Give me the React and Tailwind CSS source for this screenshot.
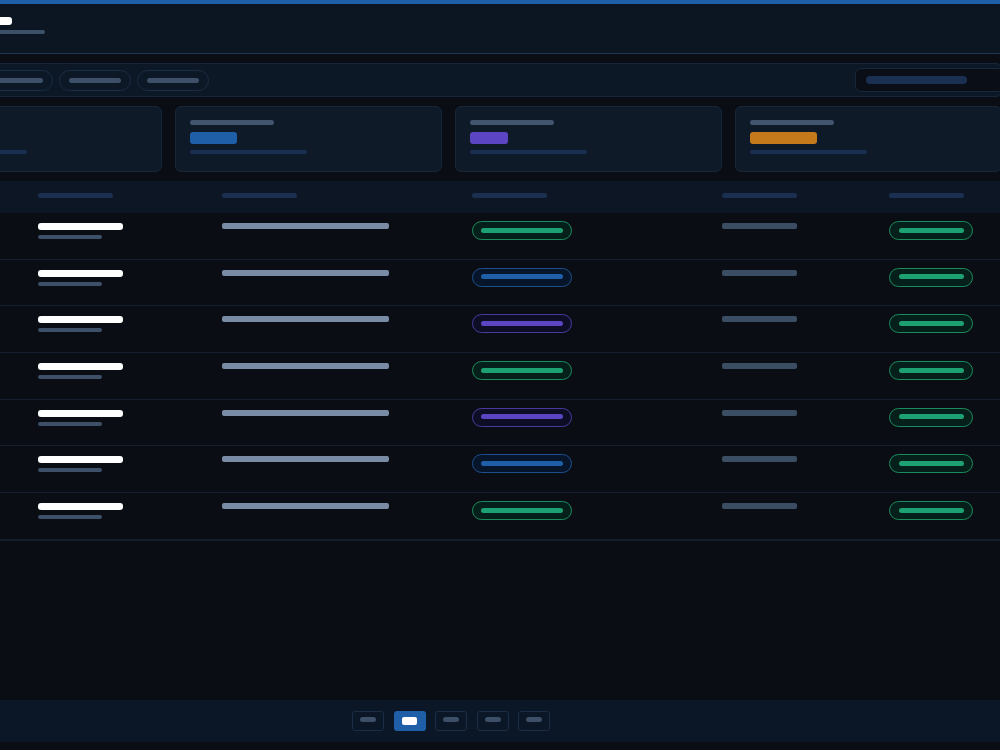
import { Fragment } from 'react'

const rows = [
  { status: 'green' },
  { status: 'blue' },
  { status: 'purple' },
  { status: 'green' },
  { status: 'purple' },
  { status: 'blue' },
  { status: 'green' },
]

const badgeStyles = {
  green: { box: 'border-[#1b8a5c] bg-[#05201a]', bar: 'bg-[#1da072]' },
  blue: { box: 'border-[#1d4f8c] bg-[#07152a]', bar: 'bg-[#1f5fa8]' },
  purple: { box: 'border-[#4a3a9e] bg-[#0e0d26]', bar: 'bg-[#5b45c2]' },
}

const stats = [
  { value: 'bg-[#1f5fa8] w-[47px]' },
  { value: 'bg-[#1f5fa8] w-[47px]' },
  { value: 'bg-[#5b45c2] w-[38px]' },
  { value: 'bg-[#c47a1a] w-[67px]' },
]

function Badge({ status, wide }) {
  const s = badgeStyles[status]
  return (
    <div
      className={`mt-[8px] flex h-[19px] items-center justify-center rounded-full border pb-[1px] ${s.box} ${
        wide ? 'w-[100px]' : 'w-[84px]'
      }`}
    >
      <div className={`h-[5px] rounded-full ${s.bar} ${wide ? 'w-[82px]' : 'w-[65px]'}`} />
    </div>
  )
}

export default function App() {
  return (
    <div
      className="flex h-[750px] w-[1137px] -ml-[120px] flex-col overflow-hidden bg-[#0a0e14]"
      style={{ fontFamily: 'Inter, "Liberation Sans", sans-serif' }}
    >
      <div className="h-1 bg-[#1f5fa8]" />

      <header className="flex h-[50px] flex-col border-b border-[#1c3352] bg-[#0c1623] px-[15px] pt-[13px]">
        <div className="h-[8px] w-[117px] rounded-[3px] bg-white" />
        <div className="mt-[5px] h-[4px] w-[150px] rounded-full bg-[#3d5068]" />
      </header>

      <main className="flex flex-col gap-[9px] px-[15px] pt-[9px]">
        <div className="flex h-[34px] items-center justify-between rounded-md border border-[#15263a] bg-[#0d1826] pl-[7px]">
          <div className="flex gap-[6px]">
            {[0, 1, 2, 3].map((i) => (
              <div
                key={i}
                className="flex h-[21px] w-[72px] items-center justify-center rounded-full border border-[#1a2d45]"
              >
                <div className="h-[5px] w-[52px] rounded-full bg-[#3d5068]" />
              </div>
            ))}
          </div>
          <div className="-mr-[12px] flex h-[24px] w-[158px] items-center rounded-md border border-[#16273b] bg-[#0a0f17] pl-[10px]">
            <div className="h-[8px] w-[101px] rounded-full bg-[#1b3050]" />
          </div>
        </div>

        <div className="grid grid-cols-4 gap-[13px]">
          {stats.map((s, i) => (
            <div key={i} className="h-[66px] rounded-md border border-[#172638] bg-[#0e1a28] px-[14px] pt-[13px]">
              <div className="h-[5px] w-[84px] rounded-full bg-[#41566e]" />
              <div className={`mt-[7px] h-[12px] rounded-[3px] ${s.value}`} />
              <div className="mt-[6px] h-[4px] w-[117px] rounded-full bg-[#1b3050]" />
            </div>
          ))}
        </div>

        <div className="border-b border-[#161f2e]">
          <div className="grid h-[32px] grid-cols-[127px_184px_250px_250px_167px_1fr] bg-[#0c1624] pl-[16px] pt-[12px]">
            <div />
            {[0, 1, 2, 3, 4].map((i) => (
              <div key={i} className="h-[5px] w-[75px] rounded-full bg-[#1b3050]" />
            ))}
          </div>
          {rows.map((r, i) => (
            <div
              key={i}
              className="grid h-[46.7px] grid-cols-[127px_184px_250px_250px_167px_1fr] border-b border-[#161f2e] pl-[16px]"
            >
              <div />
              <div>
                <div className="mt-[10px] h-[7px] w-[85px] rounded-[3px] bg-white" />
                <div className="mt-[5px] h-[4px] w-[64px] rounded-full bg-[#3d5068]" />
              </div>
              <div>
                <div className="mt-[10px] h-[6px] w-[167px] rounded-[2px] bg-[#7a8ba5]" />
              </div>
              <div>
                <Badge status={r.status} wide />
              </div>
              <div>
                <div className="mt-[10px] h-[6px] w-[75px] rounded-[2px] bg-[#3b4d63]" />
              </div>
              <div>
                <Badge status="green" />
              </div>
            </div>
          ))}
        </div>
      </main>

      <div className="flex-1" />

      <footer className="flex h-[42px] items-center justify-center gap-[9.5px] bg-[#0b1726] pl-[5px]">
        {[0, 1, 2, 3, 4].map((i) =>
          i === 1 ? (
            <div key={i} className="flex h-[20px] w-[32px] items-center justify-center rounded-[3px] bg-[#1f5fa8]">
              <div className="h-[8px] w-[15px] rounded-[2px] bg-white" />
            </div>
          ) : (
            <Fragment key={i}>
              <div className="flex h-[20px] w-[32px] justify-center rounded-[3px] border border-[#1a2d45] pt-[5px]">
                <div className="h-[5px] w-[16px] rounded-full bg-[#3d5068]" />
              </div>
            </Fragment>
          )
        )}
      </footer>
      <div className="h-2" />
    </div>
  )
}
